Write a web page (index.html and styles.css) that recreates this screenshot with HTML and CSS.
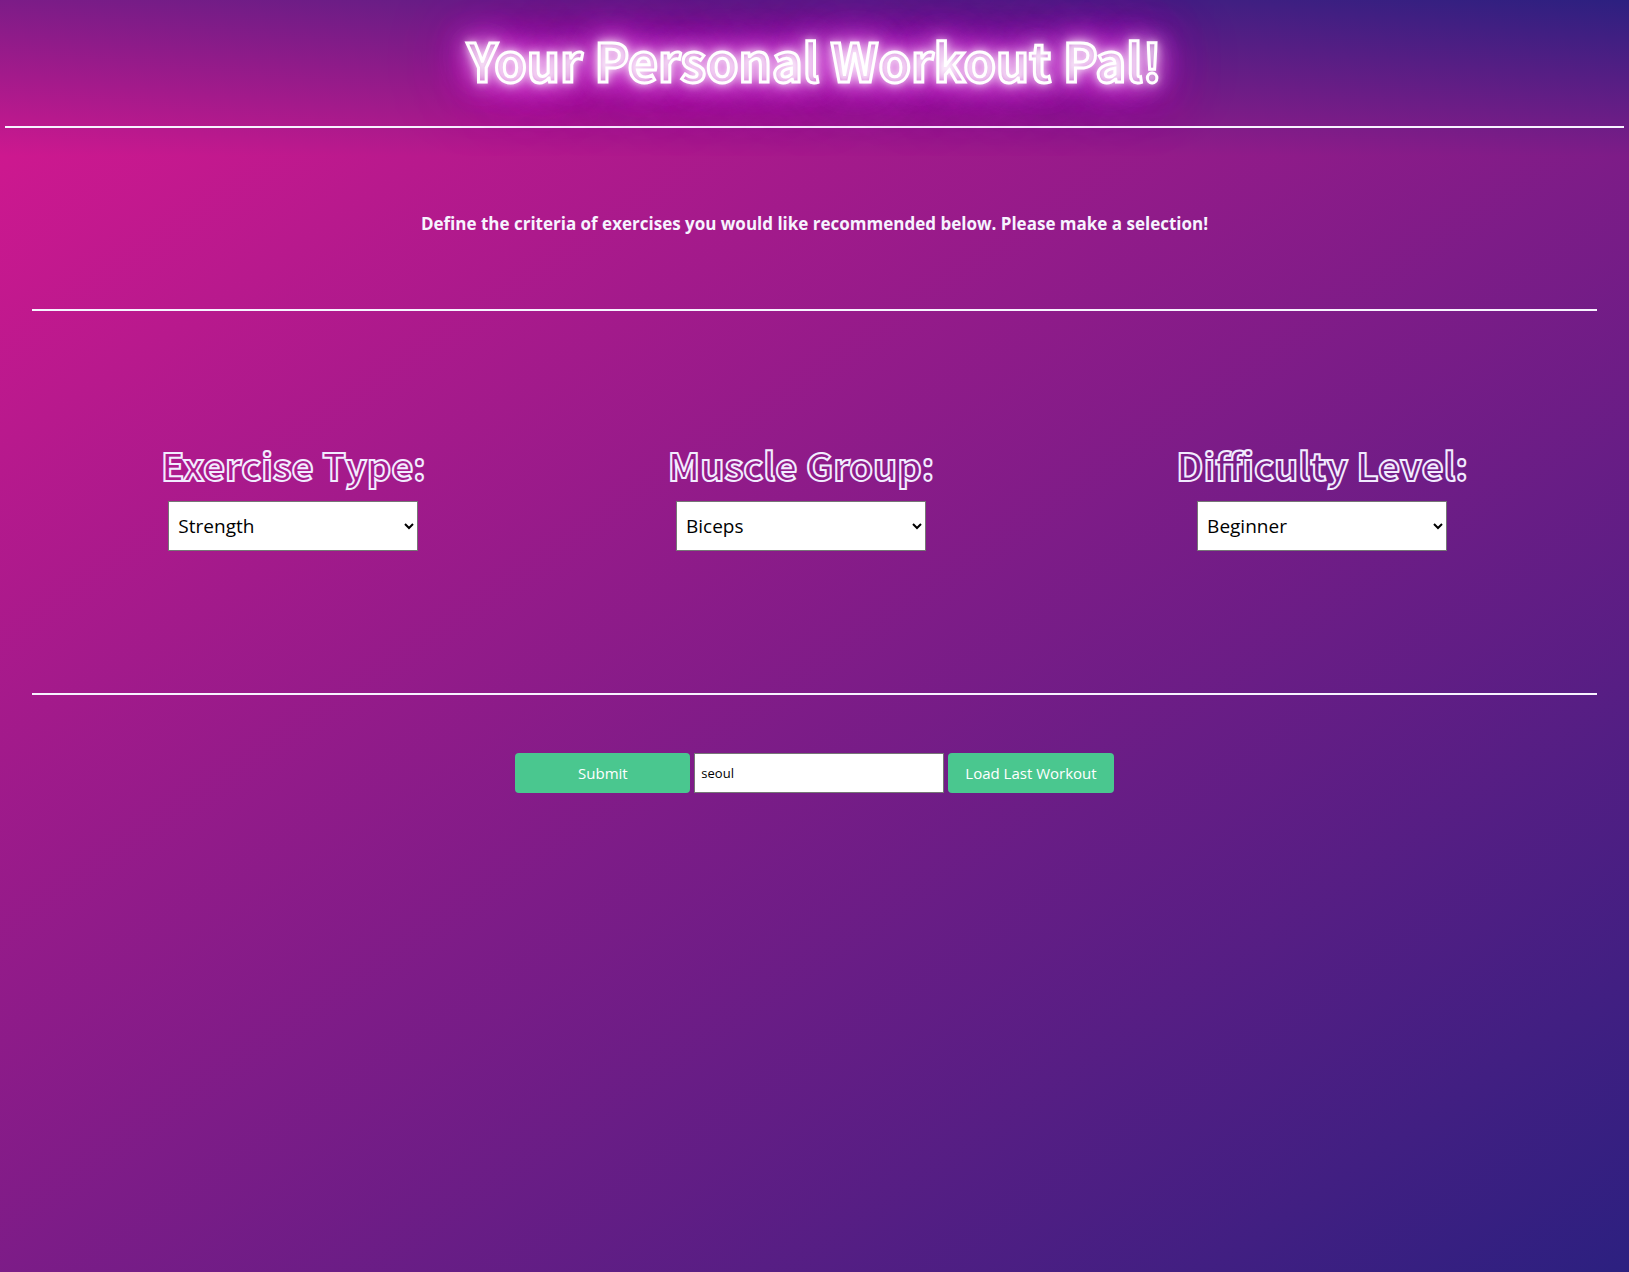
FILE: index.html
```html
<!DOCTYPE html>
<html lang="en">
<head>
  <meta charset="UTF-8">
  <meta name="viewport" content="width=device-width, initial-scale=1">
  <title>Your Personal Workout Pal!</title>
  <link rel="stylesheet" href="styles.css">
</head>
<body>
  <header class="header">
    <h1 class="title">Your Personal Workout Pal!</h1>
  </header>
  <main class="main">
    <section class="intro">
      <h2 class="intro-text">Define the criteria of exercises you would like recommended below. Please make a selection!</h2>
    </section>
    <form class="form">
      <div class="criteria">
        <div class="field">
          <label class="field-label" for="type">Exercise Type:</label>
          <select class="field-select" id="type"><option>Strength</option></select>
        </div>
        <div class="field">
          <label class="field-label" for="muscle">Muscle Group:</label>
          <select class="field-select" id="muscle"><option>Biceps</option></select>
        </div>
        <div class="field">
          <label class="field-label" for="difficulty">Difficulty Level:</label>
          <select class="field-select" id="difficulty"><option>Beginner</option></select>
        </div>
      </div>
      <div class="actions">
        <button class="button button-submit" type="submit">Submit</button>
        <input class="city" type="text" value="seoul" aria-label="City">
        <button class="button" type="button">Load Last Workout</button>
      </div>
    </form>
  </main>
</body>
</html>
```
FILE: styles.css
```css
* {
  box-sizing: border-box;
}

body {
  display: flex;
  flex-direction: column;
  min-height: 100vh;
  margin: 0;
  color: #f7f3ff;
  font-family: "Segoe UI", "Open Sans", "Noto Sans", sans-serif;
}

.header {
  padding: 0 5px 28px;
  background: linear-gradient(to top right, #cd188f, #2c2080);
}

.title {
  margin: 0;
  padding: 24px 0 30px;
  border-bottom: 2px solid #f7f3ff;
  color: transparent;
  font-family: "Noto Sans CJK JP", sans-serif;
  font-size: 52px;
  font-weight: 700;
  line-height: 72px;
  text-align: center;
  text-shadow: 0 0 10px #fff, 0 0 20px #fff, 0 0 30px #f040f0, 0 0 40px #f030f0, 0 0 60px #e018e0, 0 0 80px #c010c8;
  -webkit-text-stroke: 3px #fff;
}

.main {
  flex: 1;
  padding: 0 32px;
  background: linear-gradient(to bottom right, #cd188f, #2c2080);
}

.intro {
  padding: 56px 0 73px;
  border-bottom: 2px solid #f7f3ff;
}

.intro-text {
  margin: 0;
  font-size: 17px;
  font-weight: 700;
  line-height: 24px;
  text-align: center;
}

.criteria {
  display: flex;
  flex-wrap: wrap;
  justify-content: space-around;
  padding: 124px 8px 142px;
  border-bottom: 2px solid #f7f3ff;
}

.field {
  display: flex;
  flex-direction: column;
  align-items: center;
}

.field-label {
  padding-bottom: 6px;
  color: transparent;
  font-family: "Noto Sans CJK JP", sans-serif;
  font-size: 38px;
  font-weight: 700;
  line-height: 60px;
  -webkit-text-stroke: 2px #f2ecff;
}

.field-select {
  width: 250px;
  height: 50px;
  padding: 0 5px;
  border: 1px solid #767676;
  border-radius: 0;
  background-color: #fff;
  color: #000;
  font-family: inherit;
  font-size: 19px;
}

.actions {
  display: flex;
  flex-wrap: wrap;
  justify-content: center;
  gap: 4px;
  padding: 58px 0;
}

.button {
  height: 40px;
  padding: 0 17px;
  border: 0;
  border-radius: 4px;
  background: #4ac78f;
  color: #fff;
  font-family: inherit;
  font-size: 15px;
}

.button-submit {
  width: 175px;
}

.city {
  width: 250px;
  height: 40px;
  padding: 0 6px;
  border: 1px solid #767676;
  background: #fff;
  color: #000;
  font-family: inherit;
  font-size: 13px;
}
```
